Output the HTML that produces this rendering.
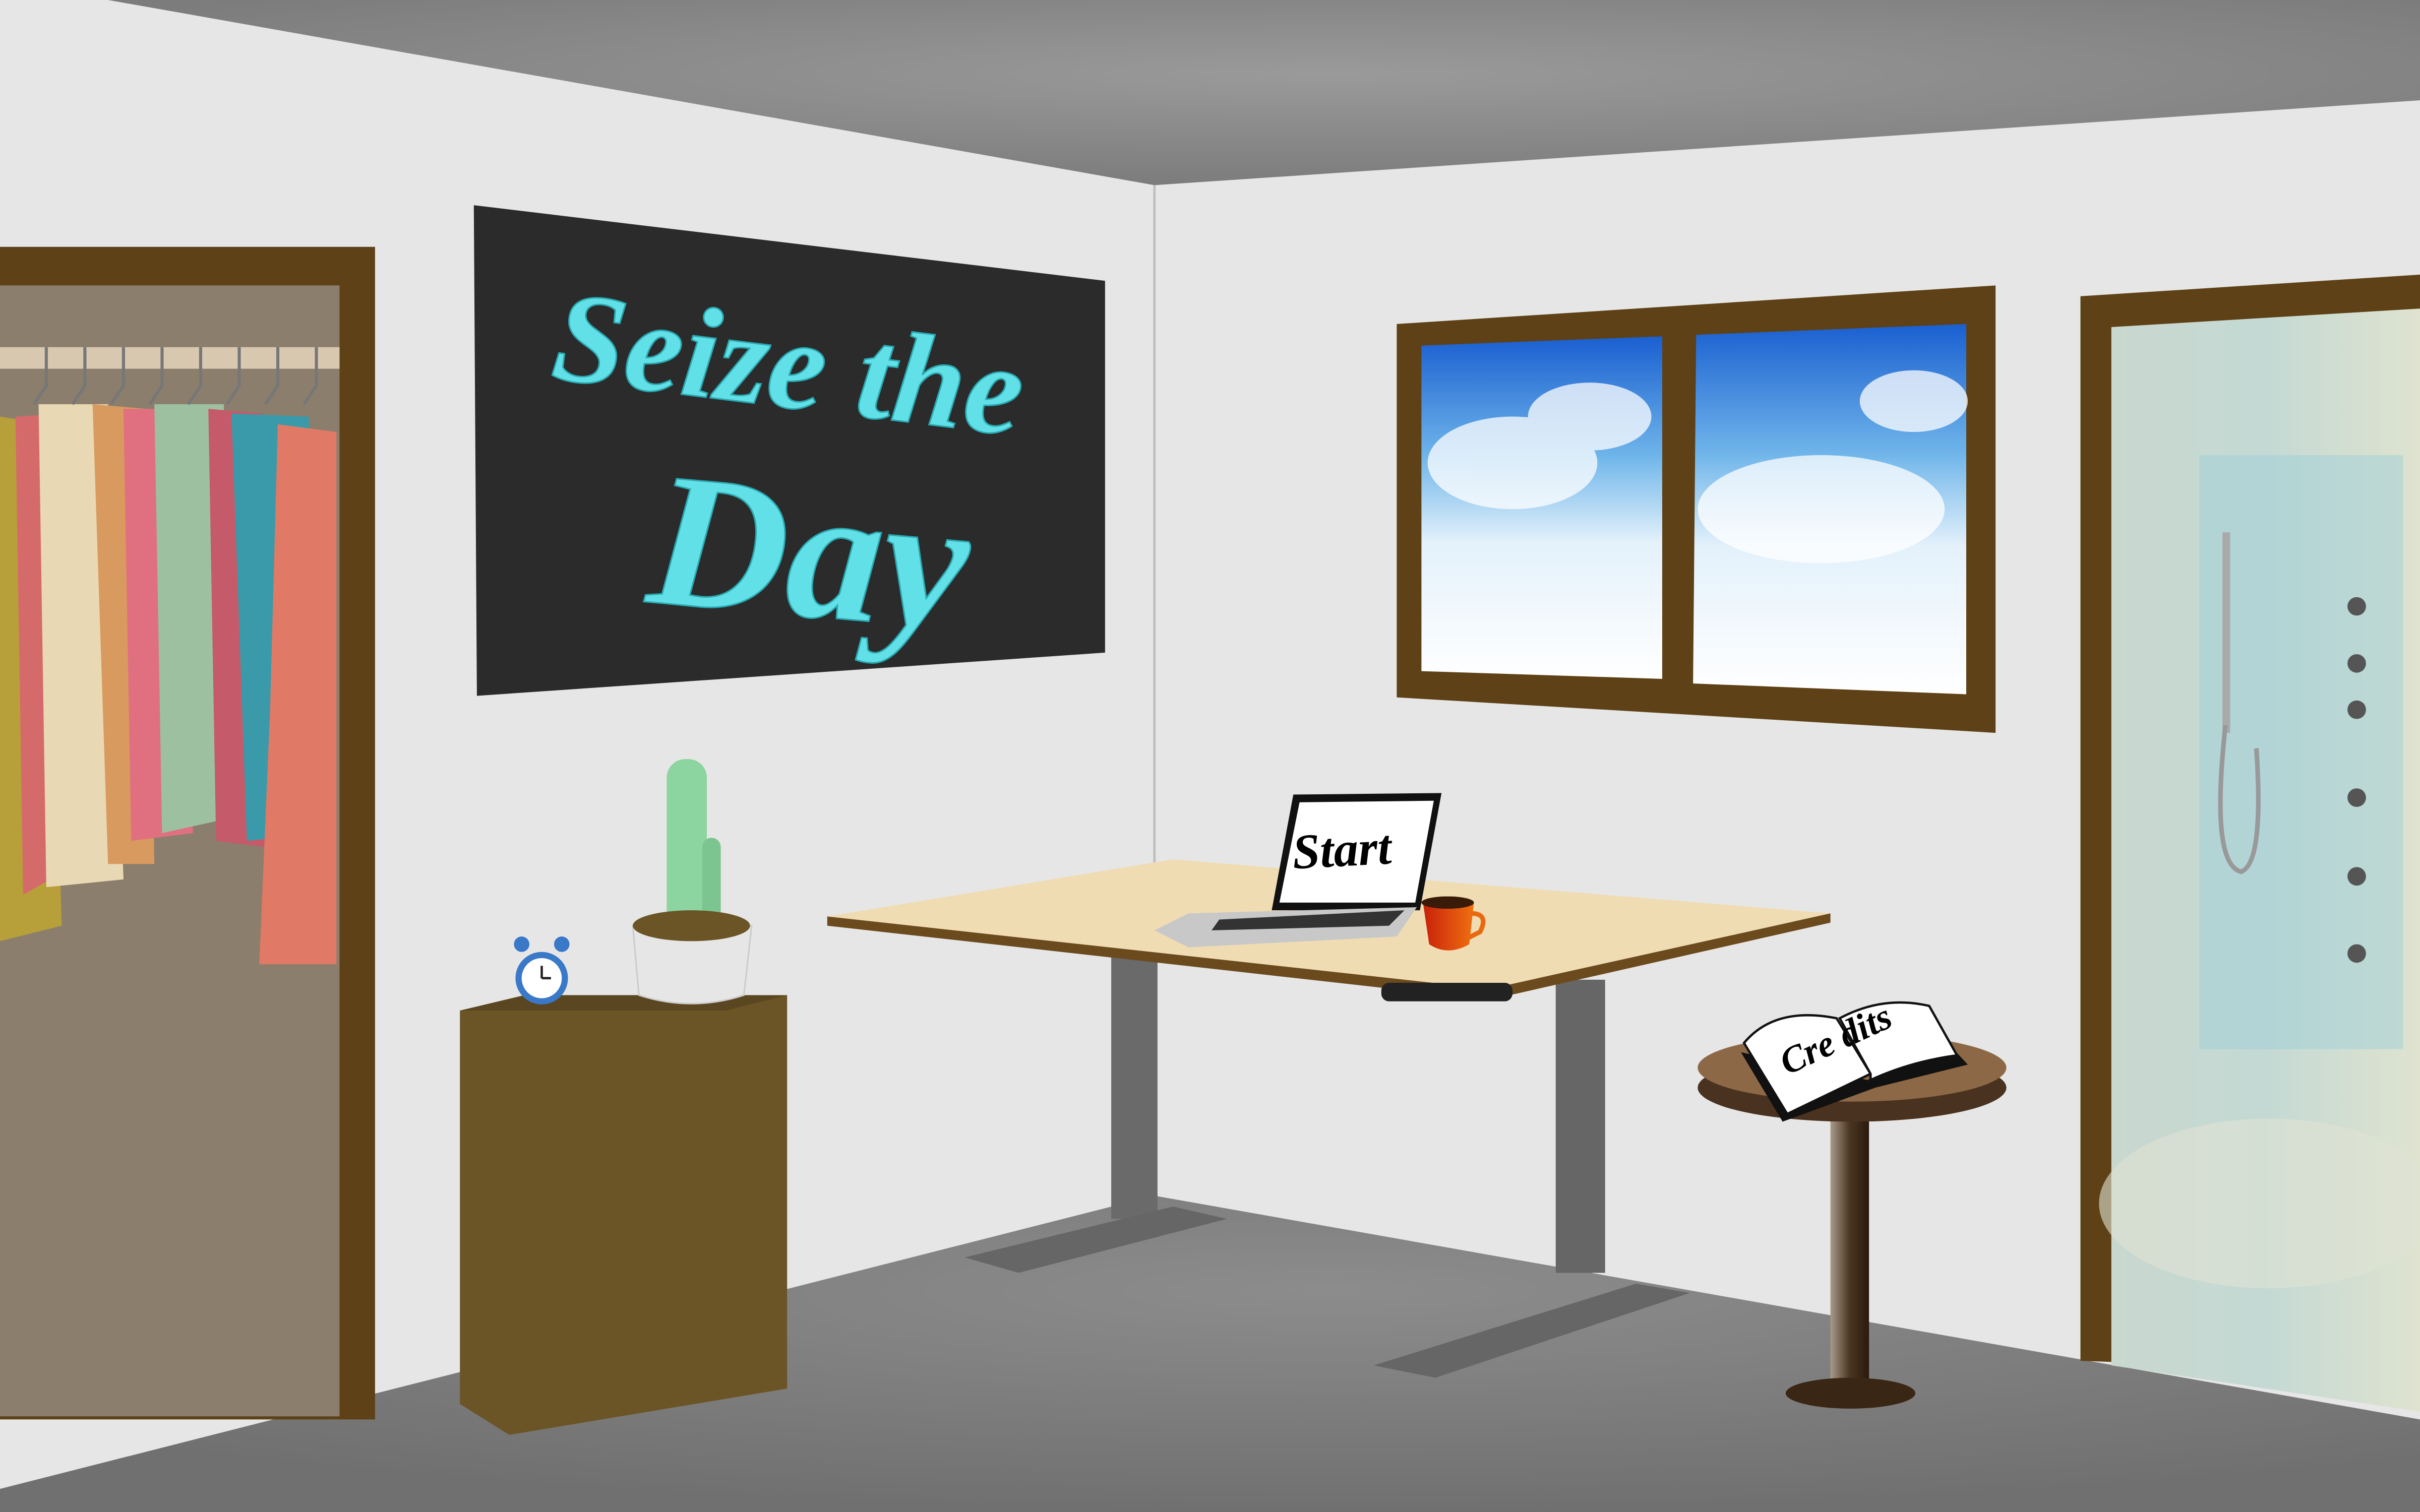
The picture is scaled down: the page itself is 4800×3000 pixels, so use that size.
<!DOCTYPE html>
<html><head><style>html,body{margin:0;padding:0;overflow:hidden;background:#e6e6e6}svg{display:block}</style></head>
<body>
<svg width="4800" height="3000" viewBox="0 0 1568 980" xmlns="http://www.w3.org/2000/svg">
<defs>
<radialGradient id="ceil" cx="0.55" cy="0.4" r="0.6"><stop offset="0" stop-color="#9a9a9a"/><stop offset="1" stop-color="#7c7c7c"/></radialGradient>
<radialGradient id="floor" cx="0.55" cy="0.3" r="0.7"><stop offset="0" stop-color="#8c8c8c"/><stop offset="1" stop-color="#707070"/></radialGradient>
<linearGradient id="sky" x1="0" y1="0" x2="0" y2="1"><stop offset="0" stop-color="#1a5fd0"/><stop offset="0.35" stop-color="#6fb5ea"/><stop offset="0.6" stop-color="#e3f1fb"/><stop offset="1" stop-color="#ffffff"/></linearGradient>
<linearGradient id="shower" x1="0" y1="0" x2="1" y2="0"><stop offset="0" stop-color="#c9d8cf"/><stop offset="0.5" stop-color="#c4d9d4"/><stop offset="1" stop-color="#dfe3cf"/></linearGradient>
<linearGradient id="pole" x1="0" y1="0" x2="1" y2="0"><stop offset="0" stop-color="#a89a8a"/><stop offset="0.5" stop-color="#4a3520"/><stop offset="1" stop-color="#2a1a0e"/></linearGradient>
<linearGradient id="cup" x1="0" y1="0" x2="1" y2="0"><stop offset="0" stop-color="#c8200a"/><stop offset="1" stop-color="#f07010"/></linearGradient>
</defs>
<rect width="1568" height="980" fill="#e6e6e6"/>
<polygon points="0,0 1568,0 1568,65 748,120 70,0" fill="url(#ceil)"/>
<polygon points="0,980 0,965 748,775 1568,920 1568,980" fill="url(#floor)"/>
<line x1="748" y1="120" x2="748" y2="775" stroke="#bdbdbd" stroke-width="1.5"/>
<!-- closet -->
<rect x="0" y="160" width="243" height="760" fill="#5e4116"/>
<rect x="0" y="185" width="220" height="733" fill="#8b7e6c"/>
<rect x="0" y="225" width="220" height="14" fill="#d8c8b0"/>
<g>
<path d="M0,270 L30,275 L40,600 L0,610Z" fill="#b7a03a"/>
<path d="M10,270 L45,268 L50,560 L15,580Z" fill="#d56a6a"/>
<path d="M25,262 L70,262 L80,570 L30,575Z" fill="#e9d8b4"/>
<path d="M60,262 L95,265 L100,560 L70,560Z" fill="#d89a5e"/>
<path d="M80,265 L120,265 L125,540 L85,545Z" fill="#e07080"/>
<path d="M100,262 L145,262 L150,530 L105,540Z" fill="#9cc0a0"/>
<path d="M135,265 L170,268 L180,550 L140,545Z" fill="#c55a6a"/>
<path d="M150,268 L200,270 L210,540 L160,545Z" fill="#3a9aaa"/>
<path d="M180,275 L218,280 L218,625 L168,625 L175,460Z" fill="#e07a66"/>
</g>
<g stroke="#777" stroke-width="2" fill="none"><path d="M30,225 v25 l-8,12 M55,225 v25 l-8,12 M80,225 v25 l-8,12 M105,225 v25 l-8,12 M130,225 v25 l-8,12 M155,225 v25 l-8,12 M180,225 v25 l-8,12 M205,225 v25 l-8,12"/></g>
<!-- poster -->
<polygon points="307,133 716,182 716,423 309,451" fill="#2b2b2b"/>
<g font-family="'Liberation Serif',serif" font-weight="bold" font-style="italic" fill="#62e0e8" stroke="#2aa8b0" stroke-width="1">
<text x="356" y="245" font-size="84" transform="rotate(7 356 245)">Seize the</text>
<text x="418" y="390" font-size="124" transform="rotate(5 418 390)">Day</text>
</g>
<!-- window -->
<polygon points="905,210 1293,185 1293,475 905,452" fill="#5e4116"/>
<polygon points="921,224 1077,218 1077,440 921,435" fill="url(#sky)"/>
<polygon points="1099,217 1274,210 1274,450 1097,443" fill="url(#sky)"/>
<g fill="#fff" opacity="0.75"><ellipse cx="980" cy="300" rx="55" ry="30"/><ellipse cx="1030" cy="270" rx="40" ry="22"/><ellipse cx="1180" cy="330" rx="80" ry="35"/><ellipse cx="1240" cy="260" rx="35" ry="20"/></g>
<!-- right door / shower -->
<polygon points="1348,192 1568,178 1568,890 1348,882" fill="#5e4116"/>
<polygon points="1368,212 1568,200 1568,915 1368,885" fill="url(#shower)"/>
<rect x="1425" y="295" width="132" height="385" fill="#9fd0d8" opacity="0.5"/>
<ellipse cx="1470" cy="780" rx="110" ry="55" fill="#e0e3d4" opacity="0.6"/>
<rect x="1440" y="345" width="5" height="130" fill="#aaa"/>
<path d="M1442,470 q-10,90 10,95 q15,-5 10,-80" stroke="#999" stroke-width="3" fill="none"/>
<g fill="#555"><circle cx="1527" cy="393" r="6"/><circle cx="1527" cy="430" r="6"/><circle cx="1527" cy="460" r="6"/><circle cx="1527" cy="517" r="6"/><circle cx="1527" cy="568" r="6"/><circle cx="1527" cy="618" r="6"/></g>
<!-- cabinet -->
<polygon points="298,655 340,645 510,645 510,900 330,930 298,910" fill="#6b5426"/>
<polygon points="298,655 340,645 510,645 470,655" fill="#5a4620"/>
<!-- clock -->
<circle cx="351" cy="634" r="17" fill="#3a78c8"/><circle cx="351" cy="634" r="13" fill="#fff"/>
<circle cx="338" cy="612" r="5" fill="#3a78c8"/><circle cx="364" cy="612" r="5" fill="#3a78c8"/>
<path d="M351,634 v-8 M351,634 h6" stroke="#222" stroke-width="1.5"/>
<!-- cactus -->
<rect x="432" y="492" width="26" height="115" rx="12" fill="#8cd4a0"/>
<rect x="455" y="543" width="12" height="60" rx="6" fill="#7cc490"/>
<path d="M410,600 L487,600 L482,645 Q448,656 414,645Z" fill="#e6e6e6" stroke="#ccc"/>
<ellipse cx="448" cy="600" rx="38" ry="10" fill="#6b5426"/>
<!-- desk -->
<polygon points="720,620 750,620 750,790 720,790" fill="#6a6a6a"/>
<polygon points="625,815 760,782 795,790 660,825" fill="#666"/>
<polygon points="1008,635 1040,635 1040,825 1008,825" fill="#666"/>
<polygon points="890,885 1060,832 1095,838 930,893" fill="#666"/>
<polygon points="536,594 760,557 1186,592 965,641" fill="#f0dcb2"/>
<polygon points="536,594 965,641 1186,592 1186,598 965,648 536,600" fill="#6b4a1e"/>
<rect x="895" y="637" width="85" height="12" rx="5" fill="#222"/>
<!-- laptop -->
<polygon points="838,515 934,514 920,590 824,590" fill="#111"/>
<polygon points="842,520 929,519 917,585 829,585" fill="#fff"/>
<text x="838" y="563" font-family="'Liberation Serif',serif" font-weight="bold" font-style="italic" font-size="32" fill="#000" transform="rotate(-3 838 563)">Start</text>
<polygon points="770,592 918,588 905,607 770,614 748,603" fill="#c8c8c8"/>
<polygon points="790,596 910,590 900,600 785,603" fill="#333"/>
<!-- cup -->
<path d="M922,585 L955,585 L952,612 Q938,620 926,612Z" fill="url(#cup)"/>
<ellipse cx="938" cy="585" rx="17" ry="4" fill="#3a1a08"/>
<path d="M953,592 q12,0 6,12 l-8,4" stroke="#e86a10" stroke-width="3" fill="none"/>
<!-- round table -->
<rect x="1186" y="720" width="25" height="180" fill="url(#pole)"/>
<ellipse cx="1199" cy="903" rx="42" ry="10" fill="#3a2614"/>
<ellipse cx="1200" cy="705" rx="100" ry="22" fill="#4a3220"/>
<ellipse cx="1200" cy="692" rx="100" ry="22" fill="#8c6846"/>
<!-- book -->
<polygon points="1128,682 1155,727 1215,705 1275,690 1262,676 1210,700" fill="#111"/>
<path d="M1130,676 Q1150,652 1190,660 L1212,696 L1158,722Z" fill="#fff" stroke="#111" stroke-width="1.5"/>
<path d="M1212,696 L1192,660 Q1220,645 1250,652 L1268,684 Q1238,688 1212,700Z" fill="#fff" stroke="#111" stroke-width="1.5"/>
<text x="1158" y="697" font-family="'Liberation Serif',serif" font-weight="bold" font-style="italic" font-size="24" fill="#000" transform="rotate(-25 1158 697)">Cre dits</text>
</svg>
</body></html>
